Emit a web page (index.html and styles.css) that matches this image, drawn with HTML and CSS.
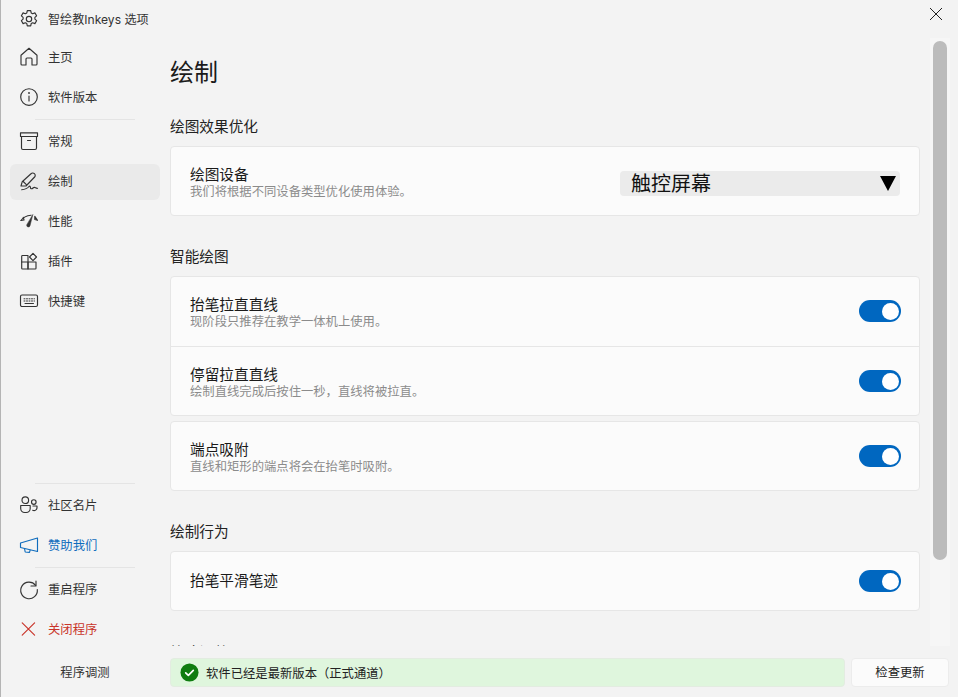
FILE: index.html
```html
<!DOCTYPE html>
<html lang="zh-CN">
<head>
<meta charset="utf-8">
<title>智绘教Inkeys 选项</title>
<link rel="stylesheet" href="styles.css">
</head>
<body>
<div class="app">
  <aside class="sidebar">
    <div class="brand">
      <svg class="icon" viewBox="0 0 20 20"><path d="M8.300 1.600h3.400l.5 2.300 1.500.8 2.200-.8 1.700 2.900-1.700 1.600v1.700l1.700 1.600-1.700 2.900-2.200-.8-1.500.8-.5 2.300H8.300l-.5-2.300-1.500-.8-2.200.8-1.700-2.900 1.700-1.600V8.400l-1.700-1.600 1.700-2.900 2.200.8 1.500-.8z"/><circle cx="10" cy="10" r="2.700"/></svg>
      <span>智绘教Inkeys 选项</span>
    </div>
    <nav class="nav">
      <a class="item"><svg class="icon" viewBox="0 0 20 20"><path d="M2 8.300 10 1.300l8 7V17a1 1 0 0 1-1 1H13v-6a1 1 0 0 0-1-1H8a1 1 0 0 0-1 1v6H3a1 1 0 0 1-1-1z"/></svg><span>主页</span></a>
      <a class="item"><svg class="icon" viewBox="0 0 20 20"><circle cx="10" cy="10" r="8.300"/><path d="M10 9v5"/><path class="dot" d="M10 6h.01"/></svg><span>软件版本</span></a>
      <div class="sep"></div>
      <a class="item"><svg class="icon" viewBox="0 0 20 20"><path d="M1.500 1.800h17v3.700h-17z"/><path d="M2.500 5.500v11.500a1.500 1.500 0 0 0 1.500 1.500h12a1.500 1.500 0 0 0 1.500-1.500V5.500"/><path d="M8.500 9.500h3"/></svg><span>常规</span></a>
      <a class="item active"><svg class="icon" viewBox="0 0 20 20"><path d="M2 15 3.200 10.800 12 2.800a2.400 2.400 0 0 1 3.600 3.200L7 15z"/><path d="m4.200 10.500 3.200 3.200"/><path d="M2.700 18.700C5 18.500 8 18 10 15.500c1-1 1.500.5 1.500 1.500s1.500 1 2.500 0 1-1 2-.5 1.500 1 2.500.8"/></svg><span>绘制</span></a>
      <a class="item"><svg class="icon" viewBox="0 0 20 20"><path d="M2 9.500C4 6.500 8 4.500 12 4.200"/><path d="M2 9.500 5 9 4.300 6.300"/><path class="solid" d="M13.800 3.800 11 14.800a1.700 1.700 0 0 1-3.300-.8z"/><path d="M15.800 5.300 18.500 9.300 15.800 8.500z"/></svg><span>性能</span></a>
      <a class="item"><svg class="icon" viewBox="0 0 20 20"><path d="M3.500 4.500h5.500v13.500H3.500a.8.8 0 0 1-.8-.8V5.300a.8.8 0 0 1 .8-.8z"/><path d="M2.700 11H17M9 11v7h7.200a.8.8 0 0 0 .8-.8V11"/><path d="m14 2.300 3.500 3.700L14 9.700 10.500 6z"/></svg><span>插件</span></a>
      <a class="item"><svg class="icon" viewBox="0 0 20 20"><rect x="1.500" y="4" width="17" height="11.500" rx="1.500"/><path class="fine" d="M5 7.800h1M7.500 7.800h1M10 7.800h1M12.500 7.800h1M15 7.800h.5M5 10h1M7.500 10h1M10 10h1M12.500 10h1M15 10h.5M6 12.500h8.500"/></svg><span>快捷键</span></a>
    </nav>
    <nav class="nav nav-bottom">
      <div class="sep"></div>
      <a class="item"><svg class="icon" viewBox="0 0 20 20"><circle cx="6.300" cy="5.200" r="3.300"/><circle cx="14.800" cy="7" r="2.300"/><path d="M1.700 10.500h9.500v3a4 4 0 0 1-4 4H5.700a4 4 0 0 1-4-4z"/><path d="M14 11H18v1.500a3 3 0 0 1-4.300 2.800"/></svg><span>社区名片</span></a>
      <a class="item blue"><svg class="icon" viewBox="0 0 20 20"><path d="M18.500 3v13.500L1.500 12.500V8z"/><path d="m5.500 13.500.7 3.500 4.300.4.600-2.100"/></svg><span>赞助我们</span></a>
      <div class="sep"></div>
      <a class="item"><svg class="icon" viewBox="0 0 20 20"><path d="M16.600 6.300A8.300 8.300 0 1 0 18.300 10.500"/><path d="M17 2v5h-5"/></svg><span>重启程序</span></a>
      <a class="item red"><svg class="icon" viewBox="0 0 20 20"><path d="m3.200 3.800 12.400 12.400M15.600 3.800 3.200 16.200"/></svg><span>关闭程序</span></a>
      <a class="item debug"><span>程序调测</span></a>
    </nav>
  </aside>
  <main class="main">
    <header class="topbar">
      <svg class="close" viewBox="0 0 14 14"><path d="m1 1 12 12M13 1 1 13"/></svg>
    </header>
    <div class="body">
      <div class="scroll">
        <h1 class="title">绘制</h1>
        <h2 class="heading">绘图效果优化</h2>
        <section class="card">
          <div class="row">
            <div class="label"><strong>绘图设备</strong><small>我们将根据不同设备类型优化使用体验。</small></div>
            <div class="select"><span>触控屏幕</span><i class="arrow"></i></div>
          </div>
        </section>
        <h2 class="heading">智能绘图</h2>
        <section class="card">
          <div class="row row-first">
            <div class="label"><strong>抬笔拉直直线</strong><small>现阶段只推荐在教学一体机上使用。</small></div>
            <div class="toggle"></div>
          </div>
          <div class="row">
            <div class="label"><strong>停留拉直直线</strong><small>绘制直线完成后按住一秒，直线将被拉直。</small></div>
            <div class="toggle"></div>
          </div>
        </section>
        <section class="card card-tight">
          <div class="row">
            <div class="label"><strong>端点吸附</strong><small>直线和矩形的端点将会在抬笔时吸附。</small></div>
            <div class="toggle"></div>
          </div>
        </section>
        <h2 class="heading">绘制行为</h2>
        <section class="card">
          <div class="row row-short">
            <div class="label"><strong>抬笔平滑笔迹</strong></div>
            <div class="toggle"></div>
          </div>
        </section>
        <h2 class="heading heading-clipped">笔迹调整</h2>
      </div>
      <div class="track"><div class="thumb"></div></div>
    </div>
    <footer class="footer">
      <div class="status">
        <svg class="check" viewBox="0 0 20 20"><circle cx="10" cy="10" r="9.500"/><path d="m6 10.300 2.800 2.700 5.200-5.200"/></svg>
        <span>软件已经是最新版本（正式通道）</span>
      </div>
      <button class="update">检查更新</button>
    </footer>
  </main>
</div>
</body>
</html>
```

FILE: styles.css
```css
* { box-sizing: border-box; }
html, body { margin: 0; height: 100%; }
body {
  background: #f3f3f3;
  color: #1b1b1b;
  font-family: "Inter", "Noto Sans CJK SC", sans-serif;
  font-size: 12.330px;
  overflow: hidden;
}
.app { display: flex; width: 958px; height: 697px; }

.sidebar {
  width: 170px;
  flex: none;
  display: flex;
  flex-direction: column;
  border-left: 1px solid #b4b4b4;
  padding: 0 10px 6px 9px;
}
.brand {
  height: 40px;
  display: flex;
  align-items: center;
  gap: 9px;
  padding: 0 0 3px 9px;
  color: #333;
  flex: none;
  font-size: 12.100px;
}
.icon {
  width: 20px;
  height: 20px;
  flex: none;
  fill: none;
  stroke: currentColor;
  stroke-width: 1.150;
  stroke-linejoin: round;
  stroke-linecap: round;
  overflow: visible;
}
.icon .dot { stroke-width: 1.800; }
.icon .solid { fill: currentColor; stroke-width: .5; }
.icon .fine { stroke-width: 1; }
.nav { display: flex; flex-direction: column; gap: 4px; }
.nav-bottom { margin-top: auto; }
.item {
  height: 36px;
  display: flex;
  align-items: center;
  gap: 9px;
  padding: 0 0 2px 9px;
  border-radius: 6px;
  color: #333;
}
.item.active { background: #eaeaea; }
.item.blue { color: #0f6cbd; }
.item.red { color: #c9342a; }
.item.debug { margin-top: 3px; justify-content: center; padding-left: 0; }
.sep {
  margin: -1px 25px 0;
  border-top: 1px solid #e4e4e4;
}

.main { flex: 1; min-width: 0; display: flex; flex-direction: column; }
.topbar { height: 38px; flex: none; display: flex; justify-content: flex-end; padding: 7px 15px 0 0; }
.close { width: 14px; height: 14px; fill: none; stroke: #222; stroke-width: 1; }
.body { height: 608px; flex: none; display: flex; gap: 10px; }
.scroll { width: 750px; flex: none; overflow: hidden; }
.title { margin: 19px 0 0; height: 32px; line-height: 32px; font-size: 24px; font-weight: 400; }
.heading { margin: 31px 0 9px; height: 20px; line-height: 20px; font-size: 14.670px; font-weight: 400; color: #222; }
.title + .heading { margin-top: 28px; }
.heading-clipped { margin-top: 32px; }
.card {
  background: #fbfbfb;
  border: 1px solid #e6e6e6;
  border-radius: 4px;
}
.card-tight { margin-top: 5px; }
.row {
  height: 68px;
  display: flex;
  align-items: center;
  justify-content: space-between;
  padding: 0 18px 0 19px;
}
.row-first { height: 69px; padding-bottom: 1px; }
.row + .row { height: 69px; border-top: 1px solid #e6e6e6; }
.row-short { height: 58px; }
.label { display: flex; flex-direction: column; padding-top: 2px; }
.row-short .label { padding-top: 0; }
.label strong { font-weight: 400; font-size: 14.670px; line-height: 18px; color: #1a1a1a; }
.label small { font-size: 12.330px; line-height: 14px; margin: 1px 0 -1px; color: #8b8b8b; }
.select {
  width: 280px;
  height: 25px;
  margin: 5px 1px 0 0;
  background: #ebebeb;
  border-radius: 4px;
  display: flex;
  align-items: center;
  justify-content: space-between;
  padding: 0 4px 2px 11px;
  font-size: 20px;
  color: #111;
}
.arrow {
  width: 0;
  height: 0;
  margin-top: 1px;
  border-left: 8.500px solid transparent;
  border-right: 8.500px solid transparent;
  border-top: 15px solid #000;
}
.toggle {
  width: 42px;
  height: 22px;
  border-radius: 11px;
  background: #0067c0;
  position: relative;
}
.toggle::after {
  content: "";
  position: absolute;
  right: 2px;
  top: 2.500px;
  width: 17px;
  height: 17px;
  border-radius: 50%;
  background: #fff;
}
.track {
  width: 20px;
  height: 608px;
  background: #f6f6f6;
  padding: 3px;
}
.thumb { width: 14px; height: 519px; border-radius: 7px; background: #bcbcbc; }

.footer { flex: 1; display: flex; gap: 6px; padding-top: 12px; }
.status {
  width: 675px;
  height: 29px;
  background: #dff6dd;
  border: 1px solid #e3ece1;
  border-radius: 4px;
  display: flex;
  align-items: center;
  gap: 7px;
  padding: 0 0 0 9px;
  color: #222;
}
.check { width: 19px; height: 19px; flex: none; }
.check circle { fill: #107c10; }
.check path { fill: none; stroke: #fff; stroke-width: 1.800; stroke-linecap: round; stroke-linejoin: round; }
.update {
  width: 98px;
  height: 29px;
  background: #fbfbfb;
  border: 1px solid #ececec;
  border-radius: 4px;
  font: inherit;
  color: #222;
  padding: 0 0 2px;
}
```
